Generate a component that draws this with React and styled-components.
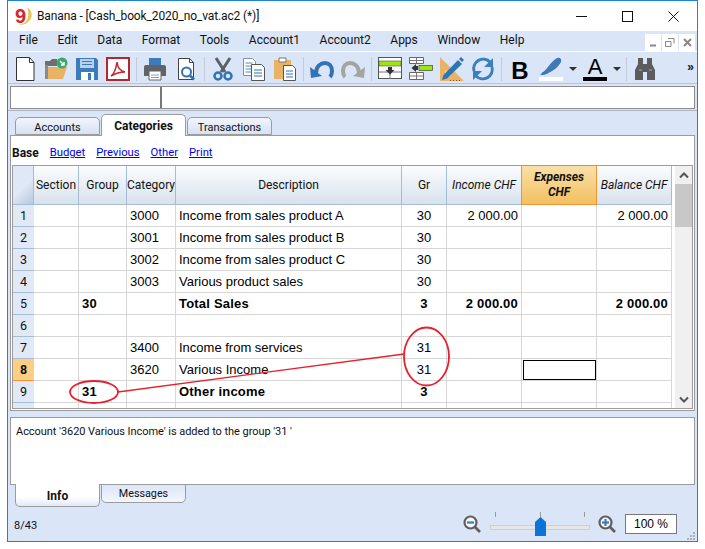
import React from "react";
import styled, { createGlobalStyle } from "styled-components";

const UI = `Roboto, "Noto Sans", "Liberation Sans", sans-serif`;
const CELL = `"Liberation Sans", Arial, sans-serif`;

const Global = createGlobalStyle`
  html, body { margin: 0; padding: 0; background: #fff; }
  body { font-family: ${UI}; font-size: 12px; color: #000; }
`;

const Win = styled.div`
  position: relative; box-sizing: border-box; margin-left: 7px; width: 691px; height: 542px;
  border: 1px solid #1c84d6; background: #dae5f8; display: flex; flex-direction: column; overflow: hidden;
`;
const TitleBar = styled.div`
  height: 30px; flex: none; background: #fff; display: flex; align-items: center; padding-left: 7px; gap: 4px;
`;
const LogoMark = styled.span`
  position: relative; flex: none; width: 18px; height: 18px; font-family: ${CELL}; font-weight: 700; font-size: 20px; line-height: 18px; color: #d8262c;
`;
const LogoSwoosh = styled.svg`position: absolute; left: 0; top: 0; width: 18px; height: 18px;`;
const TitleText = styled.span`font-size: 12px; letter-spacing: -.12px; color: #111; white-space: nowrap; flex: 1;`;
const WinCtrls = styled.div`display: flex; align-items: center; gap: 35px; padding-right: 18px;`;
const MenuBar = styled.div`
  height: 20px; flex: none; display: flex; align-items: center; gap: 19.6px; padding-left: 11px; position: relative;
  border-bottom: 1px solid #fff;
`;
const MenuItem = styled.span`font-size: 12px; color: #111; position: relative; top: -1px;`;
const MdiBtns = styled.div`
  margin-left: auto; display: flex; gap: 1px; height: 17px; align-self: flex-end; padding-right: 2px;
`;
const MdiBtn = styled.div`
  width: 16px; height: 17px; background: #fff; display: flex; align-items: center; justify-content: center;
`;
const ToolBar = styled.div`
  height: 32px; flex: none; box-sizing: border-box; display: flex; align-items: center; padding: 2px 0 0 5px;
  border-bottom: 1px solid #bcc4d0; position: relative;
`;
const ToolGroup = styled.div`display: flex; align-items: center; gap: 7px;`;
const ToolSep = styled.div`width: 1px; height: 24px; background: #c4cbd6; margin: 0 6px;`;
const Icon = styled.svg`width: 24px; height: 24px; flex: none; display: block;`;
const Caret = styled.div`
  width: 0; height: 0; margin: 0 -1px 0 -1px; border-left: 4px solid transparent; border-right: 4px solid transparent; border-top: 4px solid #333;
`;
const LetterTool = styled.div`
  width: 24px; height: 24px; display: flex; flex-direction: column; align-items: center; justify-content: flex-end;
  font-family: ${CELL}; color: #000; line-height: 20px; font-weight: ${p => (p.$bold ? 700 : 400)}; font-size: ${p => (p.$bold ? 24 : 22)}px;
`;
const ColorBar = styled.div`width: 24px; height: 4px; background: #000; flex: none;`;
const More = styled.span`
  position: absolute; right: 3px; top: 8px; font-size: 12px; font-weight: 700; color: #111; font-family: ${CELL};
`;
const InputBar = styled.div`
  flex: none; height: 23px; margin: 2px 2px 0; display: flex; background: #fff; border: 1px solid #8c8c8c; box-sizing: border-box;
`;
const InputLeft = styled.div`width: 149px; border-right: 2px solid #777;`;
const TabRule = styled.div`height: 1px; flex: none; margin-top: 1px; background: #aeb4c0;`;
const TabRow = styled.div`
  flex: none; height: 21px; margin-top: 3px; padding-left: 7px; display: flex; align-items: flex-end; gap: 1px;
`;
const TopTab = styled.div`
  box-sizing: border-box; width: 85px; height: ${p => (p.$on ? 22 : 18)}px; text-align: center; font-size: ${p => (p.$on ? 12 : 11)}px;
  font-weight: ${p => (p.$on ? 700 : 400)}; line-height: ${p => (p.$on ? 23 : 20)}px; color: #111;
  border: 1px solid #9c9c9c; border-bottom: ${p => (p.$on ? "none" : "1px solid #9c9c9c")}; border-radius: 5px 5px 0 0;
  background: ${p => (p.$on ? "#fff" : "linear-gradient(#f2f5fb, #d6e1f4)")};
  margin-bottom: ${p => (p.$on ? -1 : 0)}px; position: relative; z-index: 1;
`;
const Panel = styled.div`
  flex: none; box-sizing: border-box; height: 276px; margin: 0 2px; background: #fff; border: 1px solid #9c9c9c;
  padding: 0 1px 1px 1px; display: flex; flex-direction: column;
`;
const LinkRow = styled.div`height: 25px; padding-top: 4px; flex: none; display: flex; align-items: center; gap: 11px;`;
const BaseLink = styled.span`font-size: 12px; font-weight: 700; color: #111;`;
const Link = styled.a`font-size: 11.25px; color: #0000ee; text-decoration: underline;`;
const Table = styled.div`
  flex: 1; min-height: 0; display: flex; border: 1px solid #9c9c9c; background: #fff; overflow: hidden;
`;
const Grid = styled.div`width: 660px; flex: none; overflow: hidden;`;
const cols = "21px 45px 48px 49px 226px 45px 75px 75px 75px";
const HeadRow = styled.div`display: grid; grid-template-columns: ${cols}; height: 39px;`;
const Row = styled.div`display: grid; grid-template-columns: ${cols}; height: 22px;`;
const Head = styled.div`
  box-sizing: border-box; display: flex; align-items: center; justify-content: center; text-align: center;
  font-size: 12px; line-height: 15px; white-space: nowrap; color: #111;
  font-style: ${p => (p.$italic ? "italic" : "normal")}; font-weight: ${p => (p.$hot ? 700 : 400)};
  background: ${p => (p.$hot ? "linear-gradient(#fae0a8, #f2c060)" : "linear-gradient(#fbfcfe, #d8e2ed)")};
  border-right: 1px solid ${p => (p.$hot ? "#f0952f" : "#a4bcd6")}; border-bottom: 1px solid ${p => (p.$hot ? "#f0952f" : "#a4bcd6")};
  ${p => p.$hot && "border-left: 1px solid #f0952f; margin-left: -1px;"}
`;
const Corner = styled.div`
  box-sizing: border-box; background: linear-gradient(135deg, #dee8f6 55%, #b8c8de); border-right: 1px solid #a4bcd6; border-bottom: 1px solid #a4bcd6;
`;
const RowNum = styled.div`
  box-sizing: border-box; display: flex; align-items: center; justify-content: center; font-size: 12.5px;
  font-weight: ${p => (p.$on ? 700 : 400)}; color: #111; background: ${p => (p.$on ? "#fdcf85" : "#e1e9f6")};
  border-bottom: 1px solid ${p => (p.$on ? "#f0952f" : "#a4bcd6")};
`;
const Cell = styled.div`
  box-sizing: border-box; display: flex; align-items: center; font-family: ${CELL}; font-size: 13px; color: #000;
  padding: 0 3px; white-space: nowrap; border-right: 1px solid #d6d6d6; border-bottom: 1px solid #d6d6d6;
  font-weight: ${p => (p.$bold ? 700 : 400)}; letter-spacing: ${p => (p.$bold ? ".2px" : 0)};
  justify-content: ${p => (p.$align === "right" ? "flex-end" : p.$align === "center" ? "center" : "flex-start")};
  ${p => p.$selected && "outline: 1px solid #000; outline-offset: -2px;"}
`;
const Scroll = styled.div`
  flex: none; width: 18px; margin-left: 2px; background: #f0f0f0; display: flex; flex-direction: column; align-items: center;
`;
const ScrollBtn = styled.div`height: 18px; flex: none; display: flex; align-items: center; justify-content: center;`;
const ScrollThumb = styled.div`width: 100%; height: 43px; flex: none; background: #c8c8c8;`;
const ScrollFill = styled.div`flex: 1;`;
const InfoPane = styled.div`
  flex: none; box-sizing: border-box; height: 68px; margin: 6px 2px 0; background: #fff; border: 1px solid #9c9c9c; padding: 7px 5px;
  font-size: 11px; letter-spacing: -.05px; color: #111;
`;
const BottomTabs = styled.div`display: flex; gap: 1px; padding-left: 7px; flex: none; height: 23px; align-items: flex-start; margin-top: -1px; position: relative;`;
const BottomTab = styled.div`
  box-sizing: border-box; width: 85px; height: ${p => (p.$on ? 23 : 19)}px; text-align: center; font-size: ${p => (p.$on ? 12 : 10.75)}px; font-weight: ${p => (p.$on ? 700 : 400)};
  line-height: ${p => (p.$on ? 25 : 18)}px; color: #111; border: 1px solid #9c9c9c; border-top: ${p => (p.$on ? "none" : "1px solid #9c9c9c")};
  border-radius: 0 0 5px 5px; background: ${p => (p.$on ? "linear-gradient(#fff 60%, #e0e8f8)" : "linear-gradient(#dce6f8, #f2f5fb)")};
`;
const Status = styled.div`
  flex: 1; display: flex; align-items: center; padding: 0 20px 0 6px; font-size: 11px; color: #111; position: relative;
`;
const StatusText = styled.span`margin-right: auto; padding-top: 2px;`;
const ZoomIcon = styled.svg`width: 18px; height: 18px; flex: none;`;
const Slider = styled.div`position: relative; width: 100px; height: 24px; margin: 0 8px 0 9px;`;
const SliderTrack = styled.div`position: absolute; left: 0; right: 0; top: 13px; height: 3px; background: #e6e6e6; border: 1px solid #cfcfcf;`;
const SliderTick = styled.div`position: absolute; top: 0; width: 1px; height: 5px; background: #999;`;
const SliderThumb = styled.svg`position: absolute; left: 45px; top: 5px; width: 11px; height: 19px;`;
const ZoomBox = styled.div`
  box-sizing: border-box; width: 52px; height: 20px; margin-left: 9px; background: #fff; border: 1px solid #777; text-align: center;
  font-family: ${CELL}; font-size: 12px; line-height: 18px; color: #000;
`;
const Grip = styled.svg`position: absolute; right: 2px; bottom: 1px; width: 8px; height: 8px;`;
const Annotation = styled.svg`position: absolute; left: -8px; top: -1px; width: 705px; height: 549px; pointer-events: none; z-index: 5;`;

const rows = [
  ["1","","","3000","Income from sales product A","30","2 000.00","","2 000.00"],
  ["2","","","3001","Income from sales product B","30","","",""],
  ["3","","","3002","Income from sales product C","30","","",""],
  ["4","","","3003","Various product sales","30","","",""],
  ["5","","30","","Total Sales","3","2 000.00","","2 000.00",true],
  ["6","","","","","","","",""],
  ["7","","","3400","Income from services","31","","",""],
  ["8","","","3620","Various Income","31","","",""],
  ["9","","31","","Other income","3","","","",true],
  ["","","","","","","","",""],
];

const Logo = () => (
  <LogoMark>
    9
    <LogoSwoosh viewBox="0 0 18 18">
      <path d="M12 0c5 3 6 9 3 13-2 3-6 5-11 5 4-1 8-3 9-8 .6-3 .4-7-1-10z" fill="#e8c65a" />
    </LogoSwoosh>
  </LogoMark>
);

const I = {
  New: () => <Icon viewBox="0 0 24 24"><path d="M3.500.5h13l4.500 5v18h-17.500z" fill="#fff" stroke="#333" /><path d="M16.500.5v5h4.500" fill="none" stroke="#333" /></Icon>,
  Open: () => <Icon viewBox="0 0 24 24">
    <path d="M1 4h5l2-2h5v7H1z" fill="#6e6e6e" /><path d="M1 22l3-12h19l-4 12z" fill="#e9b264" /><path d="M1 8h3v14H1z" fill="#8a8a8a" />
    <circle cx="18" cy="6" r="5.500" fill="#3ba86e" /><path d="M16 4l4 4M20 5v3h-3" fill="none" stroke="#fff" strokeWidth="1.500" />
  </Icon>,
  Save: () => <Icon viewBox="0 0 24 24"><path d="M1 1h20l2 2v20H1z" fill="#3b7cbc" /><path d="M5 2h14v9H5z" fill="#b9d2ea" /><path d="M7 4.500h10M7 7.500h10" stroke="#3b7cbc" /><path d="M6 15h13v8H6z" fill="#fff" /><path d="M13 16h3v7h-3z" fill="#3b7cbc" /></Icon>,
  Pdf: () => <Icon viewBox="0 0 24 24"><rect x="1" y="1" width="22" height="22" fill="#fff" stroke="#b3282d" strokeWidth="2" /><path d="M5 19c3-2 5-7 6-14 .5 5 3 9 8 10-5 0-9 1-14 4z" fill="none" stroke="#c4272c" strokeWidth="1.600" /></Icon>,
  Print: () => <Icon viewBox="0 0 24 24"><path d="M6 1h12v7H6z" fill="#3b7cbc" /><path d="M3 8h18a2 2 0 0 1 2 2v9H1v-9a2 2 0 0 1 2-2z" fill="#606468" /><path d="M6 14h12v9H6z" fill="#fff" stroke="#606468" /><path d="M8 18h8M8 20.500h8" stroke="#7aa3cc" /></Icon>,
  Preview: () => <Icon viewBox="0 0 24 24"><path d="M4.500 1.500h11l4 4v17h-15z" fill="#fff" stroke="#444" /><path d="M15.500 1.500v4h4" fill="none" stroke="#444" /><circle cx="12.500" cy="15" r="4.500" fill="#fff" stroke="#2f74b5" strokeWidth="2" /><path d="M16 18.500l4 4" stroke="#2f74b5" strokeWidth="2.500" /></Icon>,
  Cut: () => <Icon viewBox="0 0 24 24"><path d="M5 1l9 14M19 1l-9 14" stroke="#5d6064" strokeWidth="3" /><circle cx="7" cy="19" r="3.500" fill="none" stroke="#2f74b5" strokeWidth="2.500" /><circle cx="17" cy="19" r="3.500" fill="none" stroke="#2f74b5" strokeWidth="2.500" /></Icon>,
  Copy: () => <Icon viewBox="0 0 24 24"><path d="M1.500 1.500h9l3 3v14h-12z" fill="#fff" stroke="#8a8f94" /><path d="M3.500 6h7M3.500 9h7M3.500 12h7M3.500 15h7" stroke="#4a8ac6" /><path d="M9.500 7.500h10l3 3v13h-13z" fill="#fff" stroke="#555" /><path d="M12 13h8M12 16h8M12 19h8" stroke="#2f74b5" strokeWidth="1.200" /></Icon>,
  Paste: () => <Icon viewBox="0 0 24 24"><path d="M1 3h17v19H1z" fill="#e9b264" /><path d="M6 1h7v4H6z" fill="#fff" stroke="#777" /><path d="M10.500 8.500h9l3 3v12h-12z" fill="#fff" stroke="#555" /><path d="M13 14h7M13 17h7M13 20h7" stroke="#2f74b5" strokeWidth="1.200" /></Icon>,
  Undo: ({ c = "#2f74b5" }) => <Icon viewBox="0 0 24 24"><path d="M6 16C6 9 11 6 15 6s7 3 7 8c0 3-1 5-2 6" fill="none" stroke={c} strokeWidth="4" /><path d="M0 10l1 11 11-2z" fill={c} /></Icon>,
  Redo: () => <Icon viewBox="0 0 24 24"><g transform="matrix(-1 0 0 1 24 0)"><path d="M6 16C6 9 11 6 15 6s7 3 7 8c0 3-1 5-2 6" fill="none" stroke="#a4a4a4" strokeWidth="4" /><path d="M0 10l1 11 11-2z" fill="#a4a4a4" /></g></Icon>,
  InsRow: () => <Icon viewBox="0 0 24 24"><rect x=".5" y=".5" width="23" height="21" fill="#fff" stroke="#555" /><rect x="1" y="4" width="22" height="5" fill="#9ce60a" stroke="#555" strokeWidth=".6" /><path d="M1 15h22M12 15v7" stroke="#777" /><path d="M10 10h4v3h2.500L12 17.500 7.500 13H10z" fill="#333" /></Icon>,
  DelRow: () => <Icon viewBox="0 0 24 24"><path d="M.5.500h14v6H.500zM.500 15.500h14v7H.500z" fill="#fff" stroke="#666" /><path d="M.500 3.500h14M7.500.5v6M.500 19h14M7.500 15.500v7" stroke="#777" /><rect x="10" y="8.500" width="13.500" height="5" fill="#9ce60a" stroke="#444" strokeWidth=".7" /><path d="M9 9v4H7v2L2.500 11 7 7v2z" fill="#333" /></Icon>,
  Ruler: () => <Icon viewBox="0 0 24 24"><path d="M0 0l24 24H0z" fill="#e9b264" /><path d="M5 13l6 6H5z" fill="#fff" opacity=".6" /><path d="M2 23l1.500-5L18 3l4 4L7 21.500z" fill="#2f74b5" /><path d="M19 2l2-2 3 3-2 2z" fill="#2f74b5" /><path d="M10 23.500h1M13 23.500h1M16 23.500h1M19 23.500h1" stroke="#555" /></Icon>,
  Sync: () => <Icon viewBox="0 0 24 24"><path d="M3 14A9.500 9.500 0 0 1 19 5" fill="none" stroke="#3b80bd" strokeWidth="3" /><path d="M21 10A9.500 9.500 0 0 1 5 19" fill="none" stroke="#3b80bd" strokeWidth="3" /><path d="M22 1v9h-9zM2 23v-9h9z" fill="#3b80bd" /></Icon>,
  Pen: () => <Icon viewBox="0 0 24 24"><path d="M3 16C8 13 12 4 18 1c3-1 5 1 4 4-3 6-9 9-14 12-2 .5-4 1-5-1z" fill="#3f79b8" /><path d="M1 18l3-3 2 3z" fill="#3f79b8" /><rect x="0" y="20" width="24" height="4" fill="#fff" /></Icon>,
  Bino: () => <Icon viewBox="0 0 24 24"><path d="M5 1h5v6h4V1h5v6l3 6v10h-8v-8h-4v8H2V13l3-6z" fill="#5c5c5c" /><path d="M6 13h3M16 13h3" stroke="#aaa" /></Icon>,
};

const Glass = ({ plus }) => (
  <ZoomIcon viewBox="0 0 18 18">
    <circle cx="7.500" cy="7.500" r="6" fill="#f4f6fa" stroke="#5f5f5f" strokeWidth="2.200" />
    <path d="M12 12l5 5" stroke="#5f5f5f" strokeWidth="2.600" />
    <path d="M4 7.500h7" stroke="#3b7cbc" strokeWidth="2.200" />
    {plus && <path d="M7.500 4v7" stroke="#3b7cbc" strokeWidth="2.200" />}
  </ZoomIcon>
);

export default function App() {
  return (
    <>
      <Global />
      <Win>
        <TitleBar>
          <Logo />
          <TitleText>Banana - [Cash_book_2020_no_vat.ac2 (*)]</TitleText>
          <WinCtrls>
            <svg width="11" height="11" viewBox="0 0 11 11"><path d="M0 5.500h11" stroke="#111" /></svg>
            <svg width="11" height="11" viewBox="0 0 11 11"><rect x=".5" y=".5" width="10" height="10" fill="none" stroke="#111" /></svg>
            <svg width="11" height="11" viewBox="0 0 11 11"><path d="M.5.500l10 10M10.500.500l-10 10" stroke="#111" /></svg>
          </WinCtrls>
        </TitleBar>
        <MenuBar>
          {["File","Edit","Data","Format","Tools","Account1","Account2","Apps","Window","Help"].map(m => <MenuItem key={m}>{m}</MenuItem>)}
          <MdiBtns>
            <MdiBtn><svg width="9" height="9" viewBox="0 0 9 9"><path d="M1 7.500h6" stroke="#888" strokeWidth="2" /></svg></MdiBtn>
            <MdiBtn><svg width="10" height="10" viewBox="0 0 10 10"><path d="M3 .500h6v5M.500 3.500h5.500v5h-5.500z" fill="none" stroke="#888" /></svg></MdiBtn>
            <MdiBtn><svg width="9" height="9" viewBox="0 0 9 9"><path d="M1 1l7 7M8 1L1 8" stroke="#888" strokeWidth="2" /></svg></MdiBtn>
          </MdiBtns>
        </MenuBar>
        <ToolBar>
          <ToolGroup><I.New /><I.Open /><I.Save /><I.Pdf /></ToolGroup>
          <ToolSep />
          <ToolGroup><I.Print /><I.Preview /></ToolGroup>
          <ToolSep />
          <ToolGroup><I.Cut /><I.Copy /><I.Paste /></ToolGroup>
          <ToolSep />
          <ToolGroup><I.Undo /><I.Redo /></ToolGroup>
          <ToolSep />
          <ToolGroup><I.InsRow /><I.DelRow /><I.Ruler /><I.Sync /></ToolGroup>
          <ToolSep />
          <ToolGroup>
            <LetterTool $bold>B</LetterTool>
            <I.Pen />
            <Caret />
            <LetterTool>A<ColorBar /></LetterTool>
            <Caret />
          </ToolGroup>
          <ToolSep />
          <I.Bino />
          <More>»</More>
        </ToolBar>
        <InputBar><InputLeft /></InputBar>
        <TabRule />
        <TabRow>
          <TopTab>Accounts</TopTab>
          <TopTab $on>Categories</TopTab>
          <TopTab>Transactions</TopTab>
        </TabRow>
        <Panel>
          <LinkRow>
            <BaseLink>Base</BaseLink>
            <Link>Budget</Link><Link>Previous</Link><Link>Other</Link><Link>Print</Link>
          </LinkRow>
          <Table>
            <Grid>
              <HeadRow>
                <Corner />
                <Head>Section</Head><Head>Group</Head><Head>Category</Head><Head>Description</Head><Head>Gr</Head>
                <Head $italic>Income CHF</Head>
                <Head $italic $hot>Expenses<br />CHF</Head>
                <Head $italic>Balance CHF</Head>
              </HeadRow>
              {rows.map((r, i) => (
                <Row key={i}>
                  <RowNum $on={r[0] === "8"}>{r[0]}</RowNum>
                  <Cell />
                  <Cell $bold={r[9]}>{r[2]}</Cell>
                  <Cell>{r[3]}</Cell>
                  <Cell $bold={r[9]}>{r[4]}</Cell>
                  <Cell $align="center" $bold={r[9]}>{r[5]}</Cell>
                  <Cell $align="right" $bold={r[9]}>{r[6]}</Cell>
                  <Cell $selected={r[0] === "8"} />
                  <Cell $align="right" $bold={r[9]}>{r[8]}</Cell>
                </Row>
              ))}
            </Grid>
            <Scroll>
              <ScrollBtn><svg width="10" height="7" viewBox="0 0 10 7"><path d="M1 5.500l4-4 4 4" fill="none" stroke="#555" strokeWidth="2" /></svg></ScrollBtn>
              <ScrollThumb />
              <ScrollFill />
              <ScrollBtn><svg width="10" height="7" viewBox="0 0 10 7"><path d="M1 1.500l4 4 4-4" fill="none" stroke="#555" strokeWidth="2" /></svg></ScrollBtn>
            </Scroll>
          </Table>
        </Panel>
        <InfoPane>Account '3620 Various Income' is added to the group '31 '</InfoPane>
        <BottomTabs>
          <BottomTab $on>Info</BottomTab>
          <BottomTab>Messages</BottomTab>
        </BottomTabs>
        <Status>
          <StatusText>8/43</StatusText>
          <Glass />
          <Slider>
            <SliderTick style={{ left: 5 }} /><SliderTick style={{ left: 50 }} /><SliderTick style={{ left: 94 }} />
            <SliderTrack />
            <SliderThumb viewBox="0 0 11 19"><path d="M5.500 0L11 5v14H0V5z" fill="#0b74d6" /></SliderThumb>
          </Slider>
          <Glass plus />
          <ZoomBox>100 %</ZoomBox>
          <Grip viewBox="0 0 8 8"><path d="M6 0h2v2H6zM3 3h2v2H3zM6 3h2v2H6zM0 6h2v2H0zM3 6h2v2H3zM6 6h2v2H6z" fill="#a8b0bc" /></Grip>
        </Status>
        <Annotation viewBox="0 0 705 549">
          <g fill="none" stroke="#e8202c" strokeWidth="1.800">
            <ellipse cx="94" cy="392" rx="24" ry="11" />
            <ellipse cx="426.500" cy="356.500" rx="22.500" ry="29" />
            <path d="M118 392L404 354" strokeWidth="1.300" />
          </g>
        </Annotation>
      </Win>
    </>
  );
}
